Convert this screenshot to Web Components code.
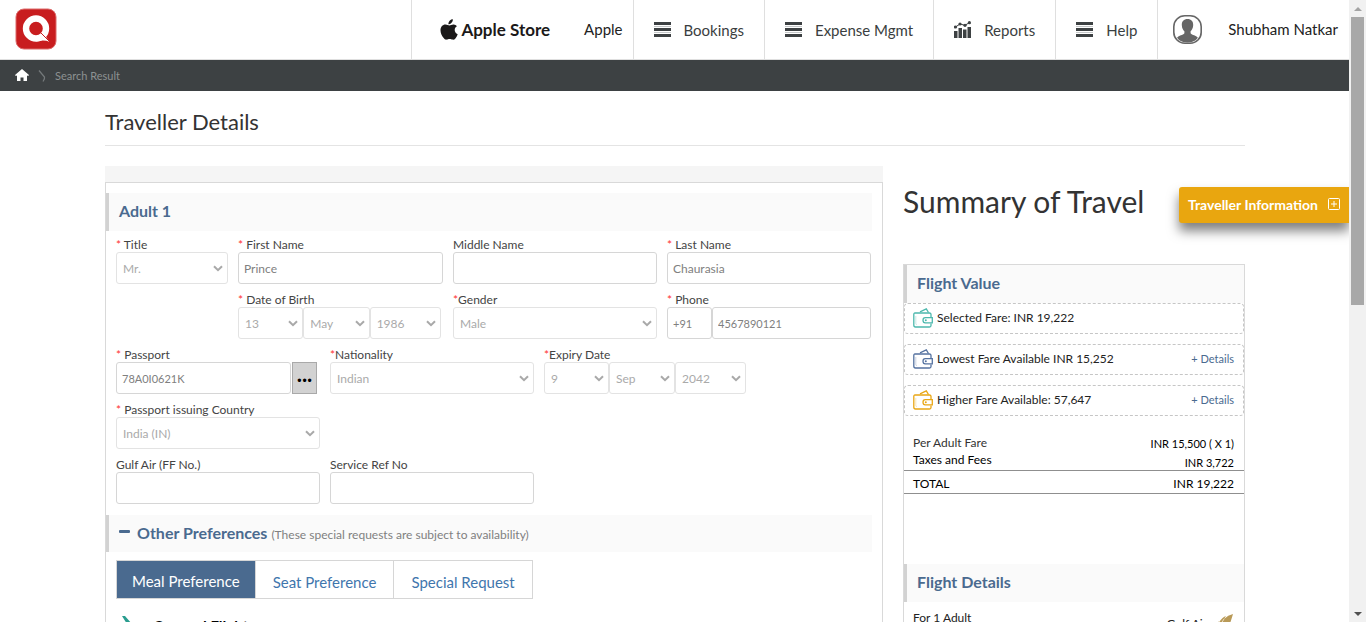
<!DOCTYPE html>
<html lang="en">
<head>
<meta charset="utf-8">
<title>Traveller Details</title>
<style>
  html, body { margin: 0; height: 100%; }
  body { font-family: Lato, "Open Sans", sans-serif; font-size: 12px; color: #333; background: #fff; overflow: hidden; }
</style>
</head>
<body>
<travel-app></travel-app>

<script>
const define = (name, html, setup) => {
  const tpl = document.createElement('template');
  tpl.innerHTML = '<style>*{box-sizing:border-box}:host([hidden]){display:none}</style>' + html;
  customElements.define(name, class extends HTMLElement {
    constructor() {
      super();
      this.attachShadow({ mode: 'open' }).append(tpl.content.cloneNode(true));
    }
    connectedCallback() {
      if (setup && !this.ready) { this.ready = true; setup(this, this.shadowRoot); }
    }
  });
};

/* ---------- icons ---------- */
const ICONS = {
  logo: ['0 0 42 42', '<rect x="1" y="1" width="40" height="40" rx="8" fill="#c81d1f" stroke="#dc6a6a" stroke-width="1"/><circle cx="21" cy="20.500" r="10" fill="none" stroke="#fff" stroke-width="6.400"/><path d="M21 33.500Q29 31.500 34.500 33.800L29 26Z" fill="#fff"/><path d="M26 25l9 9" stroke="#c81d1f" stroke-width="1"/>'],
  apple: ['0 0 18 21', '<path fill="#1b1919" d="M12.800 0.300c.2 1.600-.6 2.900-1.500 3.800-.8.900-1.900 1.300-2.900 1.200-.1-1.500.6-2.800 1.500-3.700.8-.8 2-1.300 2.900-1.300zM16.900 7.300c-1.400.9-2.200 2.100-2.200 3.800 0 1.900 1.200 3.500 3 4.200-.5 1.500-1.300 2.900-2.300 4.100-.8 1-1.700 1.400-2.900 1.200-.9-.2-1.700-.7-2.900-.7s-2 .5-2.900.7c-1.300.2-2.100-.4-3-1.500C1.600 16.700.5 13.900.5 11.300c0-3.300 2.100-5.700 5-5.700 1.600 0 2.800.9 4 .9 1 0 2.300-1 4.200-.9 1.300.1 2.400.6 3.200 1.700z"/>'],
  menu: ['0 0 17 15', '<path fill="#3d4143" d="M0 0h17v3H0zM0 6h17v3H0zM0 12h17v3H0z"/><path fill="#c5c8c9" d="M0 4h17v1H0zM0 10h17v1H0z"/>'],
  chart: ['0 0 17 17', '<path fill="#3d4143" d="M0 10h3.500v7H0zM4.500 7H8v10H4.500zM9 8.500h3.500V17H9zM13.500 6H17v11h-3.500z"/><path d="M1.500 6L6 3l5 1.300L15.500 1.500" fill="none" stroke="#3d4143" stroke-width="1"/><g fill="#3d4143"><circle cx="1.500" cy="6" r="1.600"/><circle cx="6" cy="3" r="1.600"/><circle cx="11" cy="4.300" r="1.600"/><circle cx="15.400" cy="1.700" r="1.600"/></g>'],
  user: ['0 0 29 29', '<rect x="0.800" y="0.800" width="27.400" height="27.400" rx="11" fill="#fff" stroke="#666" stroke-width="1.600"/><path fill="#666" d="M14.500 4c3.700 0 5.800 2.500 5.700 6-.1 3.200-1.300 4.900-2.600 6.200v2c1.500 2 5.500 2 7.300 4.600-2 3-5.500 4.700-10.400 4.700S6 25.800 4 22.800c1.900-2.600 5.900-2.600 7.400-4.600v-2C10 14.900 8.900 13.200 8.800 10c-.1-3.500 2-6 5.700-6z"/>'],
  home: ['0 0 14 12', '<path fill="#fff" d="M7 0l7 6-.8 1-1.200-.5V12H8.500V8.500h-3V12H2V6.500L.8 7 0 6z"/>'],
  crumb: ['0 0 8 12', '<path d="M1 0.500L6.500 7Q7 8.500 5 11.500" fill="none" stroke="#74797b" stroke-width="1.300"/>'],
  chevron: ['0 0 10 7', '<path d="M1 1.200l4 4 4-4" fill="none" stroke="#a9a9a9" stroke-width="2"/>'],
  wallet: ['0 0 20 20', '<g fill="none" stroke="currentColor" stroke-width="1.300"><path d="M18 9V6.500Q18 5 16.500 5H2Q.8 5 .8 6.500V17Q.8 19 2.500 19h14Q18 19 18 17.500V15.500"/><path d="M7 3.800L13.300.9l2.200 3.600"/><path d="M19.300 9.700h-7q-2.300 0-2.300 2.500t2.300 2.700h7z"/></g><path d="M2.800 8v7.500q0 1 1 1" fill="none" stroke="currentColor" stroke-opacity=".3"/><circle cx="12.800" cy="12.300" r="1" fill="currentColor"/>'],
  plus: ['0 0 12 12', '<g fill="none" stroke="#fff"><rect x="0.500" y="0.500" width="11" height="11" rx="1"/><path d="M6 3v6M3 6h6"/></g>'],
  minus: ['0 0 11 4', '<rect width="11" height="3" rx="1" fill="#4a6a8f"/>'],
  plane: ['0 0 22 20', '<path fill="#2a9d8f" d="M1 0h3l7 8h7q4 0 4 2t-4 2h-7l-7 8H1l4-8H3l-2 2H0l1-4-1-4h1l2 2h3z"/>'],
  falcon: ['0 0 26 22', '<path fill="#b99a58" d="M24 1Q22 8 17 22H3Q5 14 10 8L9 11Q13 4 17 3L15 6Q19 2 24 1z"/><path d="M15 6Q10 12 8 22M9 11Q6 15 5 20" fill="none" stroke="#e8dcbf"/>'],
  up: ['0 0 8 4', '<path d="M0 4L4 0l4 4z" fill="#a3a3a3"/>'],
  down: ['0 0 8 4', '<path d="M0 0l4 4 4-4z" fill="#505050"/>']
};
define('ui-icon', `<style>:host{display:block;flex:none}svg{display:block}</style><span></span>`, (el, root) => {
  const [box, art] = ICONS[el.getAttribute('name')];
  const [, , w, h] = box.split(' ');
  root.querySelector('span').innerHTML = `<svg width="${w}" height="${h}" viewBox="${box}" aria-hidden="true">${art}</svg>`;
});

/* ---------- header ---------- */
define('nav-item', `
<style>
  :host { display: flex; border-left: 1px solid #dfdfdf; }
  a { display: flex; align-items: center; gap: 13px; padding: 0 20px; font-size: 15px; color: #3a3e40; text-decoration: none; white-space: nowrap; }
</style>
<a href="#"><slot></slot></a>`, (el, root) => {
  const icon = document.createElement('ui-icon');
  icon.setAttribute('name', el.getAttribute('icon'));
  root.querySelector('a').prepend(icon);
});

define('app-header', `
<style>
  :host { display: flex; justify-content: space-between; height: 60px; border-bottom: 1px solid #dfdfdf; background: #fff; }
  .logo { align-self: center; padding: 0 0 2px 15px; }
  nav { display: flex; }
  .store { display: flex; align-items: center; border-left: 1px solid #dfdfdf; padding: 0 10px 0 28px; gap: 34px; font-size: 15px; }
  .brand { display: flex; align-items: center; gap: 3px; font-size: 17px; font-weight: 700; color: #1b1919; white-space: nowrap; }
  .org, .name { padding-bottom: 2px; color: #222; }
  .user { display: flex; align-items: center; gap: 26px; border-left: 1px solid #dfdfdf; padding: 0 11px 0 15px; font-size: 15px; white-space: nowrap; }
</style>
<a class="logo" href="#" aria-label="Home"><ui-icon name="logo"></ui-icon></a>
<nav>
  <div class="store"><span class="brand"><ui-icon name="apple"></ui-icon>Apple Store</span><span class="org">Apple</span></div>
  <nav-item icon="menu">Bookings</nav-item>
  <nav-item icon="menu">Expense Mgmt</nav-item>
  <nav-item icon="chart">Reports</nav-item>
  <nav-item icon="menu">Help</nav-item>
  <div class="user"><ui-icon name="user"></ui-icon><span class="name">Shubham Natkar</span></div>
</nav>`);

define('crumb-bar', `
<style>
  :host { display: flex; align-items: center; gap: 9px; height: 31px; padding: 0 15px; background: #3d4143; color: #8d9192; font-size: 11px; }
  a { display: block; padding-bottom: 2px; }
</style>
<a href="#" aria-label="Home"><ui-icon name="home"></ui-icon></a>
<ui-icon name="crumb"></ui-icon>
<slot></slot>`);

/* ---------- shared pieces ---------- */
define('section-bar', `
<style>
  :host { display: flex; align-items: center; height: 38px; padding: 0 10px 2px; border-left: 3px solid #d2d2d2; background: #fafafa; }
  h3 { margin: 0; font-size: 16px; line-height: 20px; font-weight: 700; color: #4a6a8f; }
  ::slotted(small) { padding: 4px 0 0 4px; font-size: 12px; line-height: 16px; color: #808080; }
  ::slotted(ui-icon) { padding: 0 7px 2px 0; }
</style>
<slot name="icon"></slot><h3><slot></slot></h3><slot name="note"></slot>`);

const CONTROL_CSS = `
  .box { position: relative; display: flex; min-width: 0; }
  .box ui-icon { position: absolute; right: 5px; top: 50%; margin-top: -3px; pointer-events: none; }
  input, select { width: 100%; min-width: 0; height: 32px; margin: 0; border: 1px solid #d6d6d6; border-radius: 3px; background: #fff; font: inherit; font-size: 12px; color: #808080; outline: 0; }
  input { padding: 0 5px; }
  select { appearance: none; padding: 0 18px 0 6px; border-color: #e3e3e3; color: #aaa; opacity: 1; }
  .digits { font-size: 11px; }`;
const LABEL_CSS = `
  label, legend { display: block; padding: 0; font-size: 12px; line-height: 14px; color: #444; white-space: nowrap; }
  i { font-style: normal; color: #f33; }`;
const star = el => !el.hasAttribute('required') ? '' : '<i>*</i>' + (el.getAttribute('required') === 'tight' ? '' : ' ');
const selectBox = (value, extra = '') => `<div class="box"><select ${extra} disabled><option>${value}</option></select><ui-icon name="chevron"></ui-icon></div>`;

define('form-field', `
<style>:host { display: block; min-width: 0; } ${CONTROL_CSS} ${LABEL_CSS}
  .line { display: grid; grid-template-columns: minmax(0, 1fr) auto; }
  ::slotted(button) { width: 25px; height: 32px; margin: 0 3px 0 1px; padding: 0 0 8px; border: 1px solid #a9a9a9; background: #d2d2d2; font: 700 22px/20px Lato, sans-serif; color: #000; }
</style>
<label for="control"></label><div class="line"><div class="host"></div><slot></slot></div>`, (el, root) => {
  root.querySelector('label').innerHTML = star(el) + el.getAttribute('label');
  const value = el.getAttribute('value') || '';
  root.querySelector('.host').innerHTML = el.hasAttribute('select')
    ? selectBox(value, 'id="control"')
    : `<div class="box"><input id="control" type="text" value="${value}"${/^\d/.test(value) ? ' class="digits"' : ''}></div>`;
});

define('date-field', `
<style>:host { display: block; min-width: 0; } ${CONTROL_CSS} ${LABEL_CSS}
  fieldset { margin: 0; padding: 0; border: 0; min-width: 0; }
  .line { display: grid; grid-template-columns: 65fr 66fr 71fr; padding-right: 2px; }
</style>
<fieldset><legend></legend><div class="line"></div></fieldset>`, (el, root) => {
  root.querySelector('legend').innerHTML = star(el) + el.getAttribute('label');
  const names = ['Day', 'Month', 'Year'];
  root.querySelector('.line').innerHTML = el.getAttribute('value').split(' ')
    .map((v, i) => selectBox(v, `aria-label="${names[i]}"`)).join('');
});

define('phone-field', `
<style>:host { display: block; min-width: 0; } ${CONTROL_CSS} ${LABEL_CSS}
  .line { display: grid; grid-template-columns: 45fr 159fr; }
</style>
<label for="number"><i>*</i> Phone</label>
<div class="line">
  <div class="box"><input class="digits" type="text" aria-label="Country code" value="+91"></div>
  <div class="box"><input class="digits" type="tel" id="number" value="4567890121"></div>
</div>`);

define('pref-tabs', `
<style>
  :host { display: flex; }
  .list { display: flex; border: 1px solid #d6d6d6; }
  button { height: 37px; margin: 0; padding: 4px 17px 0; border: 0; border-left: 1px solid #d6d6d6; background: #fff; font: inherit; font-size: 15px; color: #3f76ad; white-space: nowrap; }
  button:first-child { border-left: 0; padding: 2px 15px 0; background: #4a6a8f; color: #fff; }
</style>
<div class="list" role="tablist"><button type="button" role="tab" aria-selected="true">Meal Preference</button><button type="button" role="tab">Seat Preference</button><button type="button" role="tab">Special Request</button></div>`);

/* ---------- traveller form ---------- */
define('traveller-form', `
<style>
  :host { display: block; border-top: 16px solid #f5f5f5; min-width: 0; }
  form { border: 1px solid #d9d9d9; padding: 10px 10px 40px 0; }
  .rows { display: grid; gap: 9px; padding: 7px 1px 11px 10px; }
  .a, .b { display: grid; gap: 10px; }
  .a { grid-template-columns: 112fr 205fr 204fr 204fr; }
  .b { grid-template-columns: 204fr 204fr 204fr 113fr; }
  .a > .second { grid-column: 2; }
  pref-tabs { margin: 8px 0 0 10px; }
  .bar2 { height: 37px; }
  .leg { display: flex; gap: 10px; margin: 17px 0 0 15px; font-size: 15px; line-height: 20px; font-weight: 700; color: #000; }
</style>
<form>
  <section-bar>Adult 1</section-bar>
  <div class="rows">
    <div class="a">
      <form-field label="Title" required select value="Mr."></form-field>
      <form-field label="First Name" required value="Prince"></form-field>
      <form-field label="Middle Name"></form-field>
      <form-field label="Last Name" required value="Chaurasia"></form-field>
    </div>
    <div class="a">
      <date-field class="second" label="Date of Birth" required value="13 May 1986"></date-field>
      <form-field label="Gender" required="tight" select value="Male"></form-field>
      <phone-field></phone-field>
    </div>
    <div class="b">
      <form-field label="Passport" required value="78A0I0621K"><button type="button" aria-label="Browse passports">...</button></form-field>
      <form-field label="Nationality" required="tight" select value="Indian"></form-field>
      <date-field label="Expiry Date" required="tight" value="9 Sep 2042"></date-field>
    </div>
    <div class="b"><form-field label="Passport issuing Country" required select value="India (IN)"></form-field></div>
    <div class="b">
      <form-field label="Gulf Air (FF No.)"></form-field>
      <form-field label="Service Ref No"></form-field>
    </div>
  </div>
  <section-bar class="bar2"><ui-icon slot="icon" name="minus"></ui-icon>Other Preferences<small slot="note">(These special requests are subject to availability)</small></section-bar>
  <pref-tabs></pref-tabs>
  <div class="leg"><ui-icon name="plane"></ui-icon>Onward Flight</div>
</form>`);

/* ---------- summary ---------- */
define('fare-row', `
<style>
  :host { display: flex; align-items: center; gap: 4px; height: 31px; padding: 0 9px 2px 8px; border: 1px dashed #c6c6c6; border-radius: 4px; font-size: 12px; color: #222; }
  .text { flex: 1; }
  a { font-size: 11px; color: #4a6a8f; text-decoration: none; }
</style>
<ui-icon name="wallet"></ui-icon><span class="text"><slot></slot></span>`, (el, root) => {
  root.querySelector('ui-icon').style.color = el.getAttribute('tint');
  if (el.hasAttribute('details')) root.querySelector('.text').insertAdjacentHTML('afterend', '<a href="#">+ Details</a>');
});

define('travel-summary', `
<style>
  :host { display: block; min-width: 0; }
  h2 { margin: 17px 0 45px; font-size: 30px; line-height: 36px; font-weight: 400; color: #333; }
  section { border: 1px solid #d9d9d9; padding-bottom: 40px; }
  .fares { display: grid; gap: 10px; }
  table { width: 100%; margin: 17px 0 70px; border-collapse: collapse; font-size: 12px; line-height: 16px; color: #000; }
  th, td { padding: 1px 9px 2px; font-weight: 400; text-align: left; }
  td { padding: 3px 10px 0; text-align: right; font-size: 11px; line-height: 15px; }
  tr:first-child > * { padding-bottom: 0; }
  .total > * { padding: 5px 9px 2px; border-top: 1px solid #8f8f8f; border-bottom: 1px solid #8f8f8f; line-height: 15px; }
  .total td { padding: 5px 10px 2px; font-size: 12px; }
  .adult { color: #333; }
  .flight { display: flex; justify-content: space-between; padding: 8px 9px 0; line-height: 16px; color: #222; }
  .carrier { display: flex; align-items: center; gap: 2px; padding-top: 3px; }
</style>
<h2>Summary of Travel</h2>
<section>
  <section-bar>Flight Value</section-bar>
  <div class="fares">
    <fare-row tint="#4cb8ad">Selected Fare: INR 19,222</fare-row>
    <fare-row tint="#5572a0" details>Lowest Fare Available INR 15,252</fare-row>
    <fare-row tint="#e9a614" details>Higher Fare Available: 57,647</fare-row>
  </div>
  <table>
    <tr><th class="adult" scope="row">Per Adult Fare</th><td>INR 15,500 ( X 1)</td></tr>
    <tr><th scope="row">Taxes and Fees</th><td>INR 3,722</td></tr>
    <tr class="total"><th scope="row">TOTAL</th><td>INR 19,222</td></tr>
  </table>
  <section-bar>Flight Details</section-bar>
  <div class="flight"><span>For 1 Adult</span><span class="carrier">Gulf Air<ui-icon name="falcon"></ui-icon></span></div>
</section>`);

define('info-button', `
<style>
  :host { display: block; }
  button { display: flex; align-items: center; gap: 10px; height: 36px; margin: 0; padding: 0 9px 2px; border: 0; border-radius: 3px 0 0 3px; background: #e9a60f; box-shadow: 0 8px 12px rgba(0, 0, 0, .5); font: inherit; font-size: 14px; font-weight: 700; color: #fff; white-space: nowrap; }
</style>
<button type="button"><slot></slot><ui-icon name="plus"></ui-icon></button>`);

define('scroll-rail', `
<style>
  :host { display: flex; flex-direction: column; align-items: center; width: 17px; background: #f1f1f1; }
  .cap { display: grid; place-items: center; flex: none; width: 17px; height: 17px; }
  .track { flex: 1; width: 13px; }
  .thumb { height: 49%; background: #a8a8a8; }
</style>
<span class="cap"><ui-icon name="up"></ui-icon></span><div class="track"><div class="thumb"></div></div><span class="cap"><ui-icon name="down"></ui-icon></span>`);

define('travel-app', `
<style>
  :host { display: grid; grid-template-columns: minmax(0, 1fr) 17px; height: 100vh; }
  .page { position: relative; overflow: hidden; }
  main { max-width: 1141px; margin: 0 auto; padding-left: 1px; }
  h1 { margin: 16px 0 20px; padding-bottom: 8px; border-bottom: 1px solid #e4e4e4; font-size: 22px; line-height: 30px; font-weight: 400; color: #333; }
  .cols { display: grid; grid-template-columns: minmax(0, 1fr) 30%; gap: 20px; align-items: start; }
  info-button { position: absolute; right: 0; top: 187px; }
</style>
<div class="page">
  <app-header></app-header>
  <crumb-bar>Search Result</crumb-bar>
  <main>
    <h1>Traveller Details</h1>
    <div class="cols"><traveller-form></traveller-form><travel-summary></travel-summary></div>
  </main>
  <info-button>Traveller Information</info-button>
</div>
<scroll-rail></scroll-rail>`);
</script>
</body>
</html>
